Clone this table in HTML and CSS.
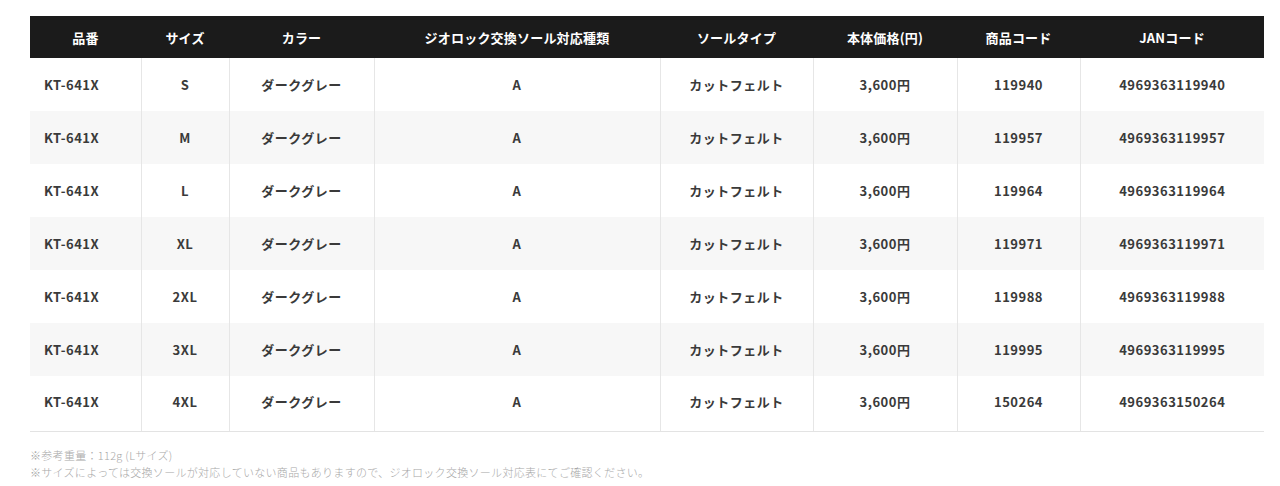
FILE: index.html
```html
<!DOCTYPE html>
<html lang="ja">
<head>
<meta charset="utf-8">
<link rel="stylesheet" href="styles.css">
</head>
<body>
<div class="wrap">
  <table class="spec">
    <colgroup>
      <col class="c1"><col class="c2"><col class="c3"><col class="c4"><col class="c5"><col class="c6"><col class="c7"><col class="c8">
    </colgroup>
    <thead>
      <tr>
        <th>品番</th><th>サイズ</th><th>カラー</th><th>ジオロック交換ソール対応種類</th><th>ソールタイプ</th><th>本体価格(円)</th><th>商品コード</th><th>JANコード</th>
      </tr>
    </thead>
    <tbody>
      <tr><td class="left">KT-641X</td><td>S</td><td>ダークグレー</td><td>A</td><td>カットフェルト</td><td>3,600円</td><td>119940</td><td>4969363119940</td></tr>
      <tr><td class="left">KT-641X</td><td>M</td><td>ダークグレー</td><td>A</td><td>カットフェルト</td><td>3,600円</td><td>119957</td><td>4969363119957</td></tr>
      <tr><td class="left">KT-641X</td><td>L</td><td>ダークグレー</td><td>A</td><td>カットフェルト</td><td>3,600円</td><td>119964</td><td>4969363119964</td></tr>
      <tr><td class="left">KT-641X</td><td>XL</td><td>ダークグレー</td><td>A</td><td>カットフェルト</td><td>3,600円</td><td>119971</td><td>4969363119971</td></tr>
      <tr><td class="left">KT-641X</td><td>2XL</td><td>ダークグレー</td><td>A</td><td>カットフェルト</td><td>3,600円</td><td>119988</td><td>4969363119988</td></tr>
      <tr><td class="left">KT-641X</td><td>3XL</td><td>ダークグレー</td><td>A</td><td>カットフェルト</td><td>3,600円</td><td>119995</td><td>4969363119995</td></tr>
      <tr><td class="left">KT-641X</td><td>4XL</td><td>ダークグレー</td><td>A</td><td>カットフェルト</td><td>3,600円</td><td>150264</td><td>4969363150264</td></tr>
    </tbody>
  </table>
  <div class="notes">
    <p>※参考重量：112g (Lサイズ)</p>
    <p>※サイズによっては交換ソールが対応していない商品もありますので、ジオロック交換ソール対応表にてご確認ください。</p>
  </div>
</div>
</body>
</html>
```

FILE: styles.css
```css
* { box-sizing: border-box; }
html, body { margin: 0; padding: 0; background: #fff; }
body {
  font-family: "Noto Sans CJK JP", "Noto Sans", sans-serif;
  color: #333;
}
.wrap {
  padding: 16px 16px 0 30px;
}
.spec {
  width: 1234px;
  border-collapse: collapse;
  table-layout: fixed;
}
.c1 { width: 111px; }
.c2 { width: 88px; }
.c3 { width: 145px; }
.c4 { width: 286px; }
.c5 { width: 153px; }
.c6 { width: 144px; }
.c7 { width: 123px; }
.c8 { width: 184px; }
.spec th {
  background: #1b1b1b;
  color: #fff;
  font-size: 13px;
  font-weight: 700;
  letter-spacing: 0.2px;
  height: 42px;
  padding: 0;
  text-align: center;
  vertical-align: middle;
}
.spec td {
  height: 53px;
  padding: 0;
  font-size: 13px;
  font-weight: 700;
  letter-spacing: 0.5px;
  color: #3a3a3a;
  text-align: center;
  vertical-align: middle;
  border-left: 1px solid #e6e6e6;
}
.spec td:first-child { border-left: none; }
.spec td.left { text-align: left; padding-left: 14px; }
.spec tbody tr:nth-child(even) td { background: #f7f7f7; }
.spec tbody tr:last-child td { height: 55px; padding-bottom: 3px; border-bottom: 1px solid #e3e3e3; }
.notes {
  margin-top: 15px;
  color: #a8a8a8;
  font-size: 11px;
  font-weight: 300;
  letter-spacing: 0.3px;
  line-height: 17px;
}
.notes p { margin: 0; }
```
